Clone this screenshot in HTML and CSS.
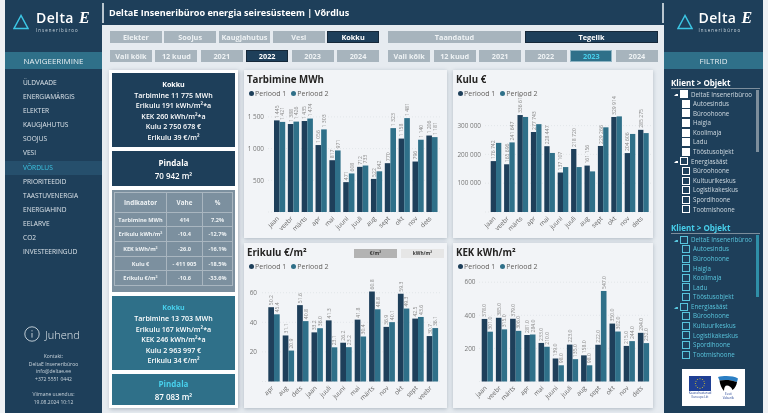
FILE: index.html
```html
<!DOCTYPE html>
<html lang="et">
<head>
    <meta charset="UTF-8">
    <meta name="viewport" content="width=device-width, initial-scale=1.0">
    <title>DeltaE Inseneribüroo energia seiresüsteem | Võrdlus</title>
    <link rel="stylesheet" href="styles.css">
</head>
<body>
<div class="page">
    <aside class="sidebar">
        <div class="logo">
            <svg class="logo-mark" viewBox="0 0 16 16"><path d="M8 1.5 1 14.5H15Z"/></svg>
            <div>
                <div class="logo-name">Delta <i>E</i></div>
                <div class="logo-sub">Inseneribüroo</div>
            </div>
        </div>
        <div class="band">NAVIGEERIMINE</div>
        <nav class="nav">
            <a href="#">ÜLDVAADE</a>
            <a href="#">ENERGIAMÄRGIS</a>
            <a href="#">ELEKTER</a>
            <a href="#">KAUGJAHUTUS</a>
            <a href="#">SOOJUS</a>
            <a href="#">VESI</a>
            <a href="#" class="active">VÕRDLUS</a>
            <a href="#">PRIORITEEDID</a>
            <a href="#">TAASTUVENERGIA</a>
            <a href="#">ENERGIAHIND</a>
            <a href="#">EELARVE</a>
            <a href="#">CO2</a>
            <a href="#">INVESTEERINGUD</a>
        </nav>
        <div class="guide">
            <svg class="guide-icon" viewBox="0 0 16 16"><circle cx="8" cy="8" r="7.2"/><path d="M8 7v4.6M8 4.2v1.2"/></svg>
            Juhend
        </div>
        <div class="contact">
            <p>Kontakt:<br>DeltaE Inseneribüroo<br>info@deltae.ee<br>+372 5551 0442</p>
            <p>Viimane uuendus:<br>19.08.2024 10:12</p>
        </div>
    </aside>

    <main class="main">
        <header class="topbar">
            <span class="divider"></span>
            <h1>DeltaE Inseneribüroo energia seiresüsteem | Võrdlus</h1>
            <span class="divider"></span>
        </header>

        <div class="filters">
            <div class="filter-group">
                <div class="btn-row five">
                    <button>Elekter</button>
                    <button>Soojus</button>
                    <button>Kaugjahutus</button>
                    <button>Vesi</button>
                    <button class="on">Kokku</button>
                </div>
                <div class="btn-row six">
                    <button>Vali köik</button>
                    <button>12 kuud</button>
                    <button>2021</button>
                    <button class="on">2022</button>
                    <button>2023</button>
                    <button>2024</button>
                </div>
            </div>
            <div class="filter-group">
                <div class="btn-row two">
                    <button>Taandatud</button>
                    <button class="on">Tegelik</button>
                </div>
                <div class="btn-row six">
                    <button>Vali kõik</button>
                    <button>12 kuud</button>
                    <button>2021</button>
                    <button>2022</button>
                    <button class="on-teal">2023</button>
                    <button>2024</button>
                </div>
            </div>
        </div>

        <div class="content">
            <section class="summary">
                <div class="stat stat-main">
                    <strong>Kokku</strong>
                    Tarbimine 11 775 MWh<br>
                    Erikulu 191 kWh/m²*a<br>
                    KEK 260 kWh/m²*a<br>
                    Kulu 2 750 678 €<br>
                    Erikulu 39 €/m²
                </div>
                <div class="stat stat-area">
                    <strong>Pindala</strong>
                    70 942 m²
                </div>
                <div class="table-wrap">
                    <table class="diff">
                        <tr><th>Indikaator</th><th>Vahe</th><th>%</th></tr>
                        <tr><td>Tarbimine MWh</td><td>414</td><td>7.2%</td></tr>
                        <tr><td>Erikulu kWh/m²</td><td>-10.4</td><td>-12.7%</td></tr>
                        <tr><td>KEK kWh/m²</td><td>-26.0</td><td>-16.1%</td></tr>
                        <tr><td>Kulu €</td><td>- 411 905</td><td>-18.5%</td></tr>
                        <tr><td>Erikulu €/m²</td><td>-10.6</td><td>-33.6%</td></tr>
                    </table>
                </div>
                <div class="stat stat-main teal">
                    <strong>Kokku</strong>
                    Tarbimine 13 703 MWh<br>
                    Erikulu 167 kWh/m²*a<br>
                    KEK 246 kWh/m²*a<br>
                    Kulu 2 963 997 €<br>
                    Erikulu 34 €/m²
                </div>
                <div class="stat stat-area teal">
                    <strong>Pindala</strong>
                    87 083 m²
                </div>
            </section>

            <section class="charts">
                <article class="chart-card">
                    <h2>Tarbimine MWh</h2>
                    <div class="legend"><span class="key">Periood 1</span><span class="key two">Periood 2</span></div>
                    <svg class="chart" id="chart-tarbimine"></svg>
                </article>
                <article class="chart-card narrow">
                    <h2>Kulu €</h2>
                    <div class="legend"><span class="key">Periood 1</span><span class="key two">Periood 2</span></div>
                    <svg class="chart" id="chart-kulu"></svg>
                </article>
                <article class="chart-card">
                    <div class="title-row">
                        <h2>Erikulu €/m²</h2>
                        <span class="unit on">€/m²</span>
                        <span class="unit">kWh/m²</span>
                    </div>
                    <div class="legend"><span class="key">Periood 1</span><span class="key two">Periood 2</span></div>
                    <svg class="chart" id="chart-erikulu"></svg>
                </article>
                <article class="chart-card narrow">
                    <h2>KEK kWh/m²</h2>
                    <div class="legend"><span class="key">Periood 1</span><span class="key two">Periood 2</span></div>
                    <svg class="chart" id="chart-kek"></svg>
                </article>
            </section>
        </div>
    </main>

    <aside class="sidebar right">
        <div class="logo">
            <svg class="logo-mark" viewBox="0 0 16 16"><path d="M8 1.5 1 14.5H15Z"/></svg>
            <div>
                <div class="logo-name">Delta <i>E</i></div>
                <div class="logo-sub">Inseneribüroo</div>
            </div>
        </div>
        <div class="band">FILTRID</div>

        <div class="slicer">
            <h3>Klient &gt; Objekt</h3>
            <span class="scroll"></span>
            <ul class="tree">
                <li class="parent full">DeltaE Inseneribüroo</li>
                <li class="full">Autoesindus</li>
                <li class="full">Büroohoone</li>
                <li class="full">Haigla</li>
                <li class="full">Koolimaja</li>
                <li class="full">Ladu</li>
                <li class="full">Tööstusobjekt</li>
                <li class="parent">Energiasääst</li>
                <li>Büroohoone</li>
                <li>Kultuurikeskus</li>
                <li>Logistikakeskus</li>
                <li>Spordihoone</li>
                <li>Tootmishoone</li>
            </ul>
        </div>

        <div class="slicer cyan">
            <h3>Klient &gt; Objekt</h3>
            <span class="scroll"></span>
            <ul class="tree">
                <li class="parent">DeltaE Inseneribüroo</li>
                <li>Autoesindus</li>
                <li>Büroohoone</li>
                <li>Haigla</li>
                <li>Koolimaja</li>
                <li>Ladu</li>
                <li>Tööstusobjekt</li>
                <li class="parent">Energiasääst</li>
                <li>Büroohoone</li>
                <li>Kultuurikeskus</li>
                <li>Logistikakeskus</li>
                <li>Spordihoone</li>
                <li>Tootmishoone</li>
            </ul>
        </div>

        <div class="funders">
            <div class="funder">
                <svg class="flag" viewBox="0 0 22 15">
                    <rect width="22" height="15" fill="#1f3f93"/>
                    <g fill="#e8d21f">
                        <circle cx="11" cy="2.7" r=".5"/><circle cx="13.4" cy="3.4" r=".5"/><circle cx="15" cy="5.2" r=".5"/>
                        <circle cx="15.6" cy="7.5" r=".5"/><circle cx="15" cy="9.8" r=".5"/><circle cx="13.4" cy="11.6" r=".5"/>
                        <circle cx="11" cy="12.3" r=".5"/><circle cx="8.6" cy="11.6" r=".5"/><circle cx="7" cy="9.8" r=".5"/>
                        <circle cx="6.4" cy="7.5" r=".5"/><circle cx="7" cy="5.2" r=".5"/><circle cx="8.6" cy="3.4" r=".5"/>
                    </g>
                </svg>
                <small>Kaasrahastanud<br>Euroopa Liit</small>
            </div>
            <div class="funder">
                <svg class="crest" viewBox="0 0 20 16">
                    <path d="M0 1C6-.5 15-.5 20 2.5L19 6C13 3.5 6 3.5 1.5 4.5Z" fill="#2b7fc4"/>
                    <path d="M1.5 4.5C6 3.5 13 3.5 19 6 18.5 9.5 17 12 14.5 14 13.5 11 11 9.5 9 9.5 7 9.5 6 11.5 6 15 3.5 12.5 2 8.5 1.5 4.5Z" fill="#000"/>
                </svg>
                <small>Eesti<br>Vabariik</small>
            </div>
        </div>
    </aside>
</div>
<script src="charts.js"></script>
</body>
</html>
```

FILE: styles.css
```css
* {
    box-sizing: border-box;
}
body {
    margin: 0;
    background: #eef1f4;
    font-family: "Open Sans", "Noto Sans", sans-serif;
    overflow: hidden;
}
.page {
    display: flex;
    width: 768px;
    height: 413px;
    padding: 0 5px;
    overflow: hidden;
    filter: blur(.35px);
}

/* side columns */
.sidebar {
    display: flex;
    flex-direction: column;
    flex: 0 0 97px;
    background: #1e3f5a;
    color: #fff;
}
.sidebar.right {
    flex-basis: 99px;
}
.logo {
    display: flex;
    align-items: center;
    justify-content: center;
    gap: 5px;
    height: 52px;
    padding-bottom: 9px;
}
.sidebar:not(.right) .logo {
    gap: 7px;
    padding-right: 4px;
}
.sidebar.right .logo {
    padding-left: 3px;
}
.logo-mark {
    width: 16px;
    height: 16px;
    fill: none;
    stroke: #3cc6e4;
    stroke-width: 1.5;
}
.logo-name {
    font-size: 14px;
    font-weight: 600;
    line-height: 15px;
    letter-spacing: .4px;
}
.logo-name i {
    font-family: "Liberation Serif", serif;
    font-weight: 700;
    font-size: 16px;
    margin-left: 1px;
}
.logo-sub {
    margin-top: 3px;
    font-size: 4.4px;
    line-height: 5px;
    letter-spacing: 1.05px;
    color: #cfd9e0;
}
.band {
    height: 17px;
    background: #2f7089;
    font-size: 8px;
    line-height: 17px;
    text-align: center;
    color: #e6eef2;
}

.nav {
    display: flex;
    flex-direction: column;
    margin-top: 7px;
}
.nav a {
    height: 14.1px;
    padding-left: 18px;
    font-size: 6.6px;
    line-height: 14.1px;
    color: #dbe3e9;
    text-decoration: none;
}
.nav a.active {
    background: #264f6c;
    color: #3cc6e4;
}

.guide {
    display: flex;
    align-items: center;
    gap: 5px;
    margin-top: auto;
    padding-left: 19px;
    font-size: 11px;
    font-weight: 300;
    color: #dfe7ec;
}
.guide-icon {
    width: 16px;
    height: 16px;
    fill: none;
    stroke: #e6edf1;
    stroke-width: .8;
}
.contact {
    height: 60px;
    margin-top: 11px;
    font-size: 5px;
    line-height: 7.6px;
    text-align: center;
    color: #c9d4dc;
}
.contact p {
    margin: 0 0 8px;
}

/* main column */
.main {
    display: flex;
    flex-direction: column;
    flex: 1;
    min-width: 0;
    background: #e6ebf0;
}
.topbar {
    display: flex;
    align-items: center;
    justify-content: space-between;
    height: 25px;
    background: #1e3f5a;
}
.topbar h1 {
    flex: 1;
    margin: 0 0 0 5px;
    font-size: 9.1px;
    font-weight: 700;
    color: #fff;
}
.divider {
    width: 2px;
    height: 20px;
    background: #b9c6cf;
}

.filters {
    display: grid;
    grid-template-columns: 269px 270px;
    column-gap: 9px;
    padding: 6px 0 0 8px;
}
.filter-group {
    display: flex;
    flex-direction: column;
    gap: 7px;
}
.btn-row {
    display: grid;
    height: 12px;
}
.btn-row.five {
    grid-template-columns: repeat(5, 1fr);
    column-gap: 2.5px;
}
.btn-row.six {
    grid-template-columns: repeat(6, 1fr);
    column-gap: 3.5px;
}
.btn-row.two {
    grid-template-columns: 1fr 1fr;
    column-gap: 4px;
}
.btn-row button {
    padding: 0;
    border: 0;
    background: #a7b4bd;
    font-family: inherit;
    font-size: 7.3px;
    font-weight: 700;
    color: #eef2f4;
}
.btn-row button.on {
    background: #1e3f5a;
    border: 1px solid #16293a;
    color: #fff;
}
.btn-row button.on-teal {
    background: #2f7089;
    border: 1px solid #8fb4c3;
    color: #48d0ec;
}

.content {
    display: flex;
    flex: 1;
    gap: 6px;
    padding: 8px 0 5px 7px;
    min-height: 0;
}
.summary {
    display: flex;
    flex-direction: column;
    flex: 0 0 129px;
    gap: 4px;
    padding: 3px;
    background: #fff;
    box-shadow: 1px 1px 4px rgba(50, 70, 90, .35);
}
.stat {
    background: #1e3f5a;
    font-size: 7.1px;
    font-weight: 600;
    line-height: 10.6px;
    text-align: center;
    color: #fff;
}
.stat strong {
    display: block;
    font-weight: 700;
    color: #fff;
}
.stat.teal {
    background: #2f7089;
}
.stat.teal strong {
    color: #48d0ec;
}
.stat-main {
    height: 74px;
    padding-top: 6px;
}
.stat-area {
    height: 35px;
    padding-top: 5px;
    font-size: 8px;
    line-height: 13px;
}
.stat-area.teal {
    height: 31px;
    padding-top: 3px;
}
.table-wrap {
    height: 103px;
    padding: 2px;
    background: #7c909f;
}
.diff {
    width: 100%;
    height: 93px;
    table-layout: fixed;
    border-collapse: collapse;
    font-size: 5.6px;
    font-weight: 700;
    text-align: center;
    color: #eef2f4;
}
.diff th,
.diff td {
    padding: 0;
    border: 1px solid #a9b6c0;
}
.diff th {
    height: 20px;
    font-size: 6.3px;
}
.diff td {
    height: 14.7px;
}
.diff th:first-child {
    width: 52px;
}
.diff th:nth-child(2) {
    width: 36px;
}

/* charts */
.charts {
    display: grid;
    grid-template-columns: 203px 200px;
    grid-template-rows: 168px 165px;
    gap: 5px 6px;
}
.chart-card {
    display: flex;
    flex-direction: column;
    background: #f2f4f7;
    box-shadow: 0 1px 4px rgba(50, 70, 90, .3);
    padding: 3px 0 0 3px;
    min-height: 0;
}
.chart-card h2 {
    margin: 0;
    font-size: 9.7px;
    font-weight: 700;
    line-height: 14px;
    color: #252423;
}
.title-row {
    display: flex;
    align-items: center;
    gap: 4px;
    padding-right: 3px;
}
.title-row h2 {
    flex: 1;
}
.unit {
    width: 43px;
    height: 9px;
    background: #e6e6e6;
    font-size: 4.8px;
    font-weight: 700;
    line-height: 9px;
    text-align: center;
    color: #333;
}
.unit.on {
    background: #b3b3b3;
}
.legend {
    display: flex;
    gap: 5px;
    height: 11px;
    margin-top: 1px;
    padding-left: 2px;
    align-items: center;
    font-size: 7px;
    color: #605e5c;
}
.key {
    display: flex;
    align-items: center;
    gap: 1px;
}
.key::before {
    content: "";
    width: 5px;
    height: 5px;
    border-radius: 50%;
    background: #1e3f5a;
}
.key.two::before {
    background: #2f7089;
}
.chart {
    display: block;
    flex: 1;
    width: calc(100% + 3px);
    min-height: 0;
    margin-top: -1px;
    margin-left: -3px;
    overflow: visible;
}
.chart text {
    font-family: "Open Sans", "Noto Sans", sans-serif;
}
.bar-a {
    fill: #1e3f5a;
}
.bar-b {
    fill: #2f7089;
}
.grid-line {
    stroke: #d9dde1;
    stroke-width: .6;
    stroke-dasharray: 1 2;
}
.tick {
    font-size: 6.4px;
    fill: #777;
    text-anchor: end;
}
.cat {
    font-size: 6.4px;
    fill: #666;
    text-anchor: end;
}
.val {
    font-size: 5.1px;
    fill: #8a8a8a;
}

/* filter lists */
.slicer {
    position: relative;
    margin: 8.5px 3px 0 7px;
}
.slicer h3 {
    height: 11px;
    margin: 0 0 1px;
    border-bottom: 1px solid #7d8e9c;
    font-size: 8px;
    font-weight: 700;
    line-height: 10px;
    color: #fff;
}
.scroll {
    position: absolute;
    top: 12px;
    right: 1px;
    width: 3px;
    height: 62px;
    background: #7d8e9c;
}
.tree {
    margin: 0;
    padding: 0;
    list-style: none;
    font-size: 6.2px;
    line-height: 9.6px;
    color: #cfd9e0;
}
.tree li {
    display: flex;
    align-items: center;
    gap: 3px;
    height: 9.6px;
    padding-left: 11px;
}
.tree li::before {
    content: "";
    flex: none;
    width: 6px;
    height: 6px;
    border: 1px solid #fff;
}
.tree li.full::before {
    background: #fff;
}
.tree li.parent {
    padding-left: 3px;
}
.tree li.parent::after {
    content: "";
    order: -1;
    flex: none;
    width: 2px;
    height: 2px;
    margin-right: -1px;
    border-left: 2px solid transparent;
    border-bottom: 2px solid #fff;
}
.slicer.cyan h3 {
    color: #48d0ec;
}
.slicer.cyan .tree {
    color: #58c4dc;
}
.slicer.cyan .tree li::before {
    border-color: #58c4dc;
}
.slicer.cyan .tree li.parent::after {
    border-bottom-color: #58c4dc;
}
.slicer.cyan .scroll {
    background: #2f8fa8;
}

.funders {
    display: flex;
    justify-content: center;
    gap: 7px;
    width: 63px;
    height: 37px;
    margin: 10px 0 0 18px;
    padding-top: 7px;
    background: #fff;
}
.funder {
    display: flex;
    flex-direction: column;
    align-items: center;
}
.flag {
    width: 22px;
    height: 15px;
}
.crest {
    width: 20px;
    height: 16px;
}
.funder small {
    margin-top: 1px;
    font-size: 3px;
    line-height: 3.4px;
    text-align: center;
    color: #1f3f93;
}
```

FILE: charts.js
```js
const NS = "http://www.w3.org/2000/svg";
const months = ["jaan", "veebr", "märts", "apr", "mai", "juuni", "juuli", "aug", "sept", "okt", "nov", "dets"];

const spaced = n => String(n).replace(/\B(?=(\d{3})+$)/g, " ");

// x values are relative to the card's left edge, y to the top of the svg
const charts = [
    {
        id: "chart-tarbimine", cats: months, zero: 114, scale: 31.7 / 500,
        ticks: [500, 1000, 1500], tickX: 20, gridFrom: 24, gridTo: 198,
        start: 30, pitch: 13.85, barW: 5.6, fmt: spaced,
        a: [1445, 1388, 1435, 1056, 817, 471, 712, 522, 770, 1158, 796, 1206],
        b: [1421, 1426, 1474, 1303, 971, 608, 733, 642, 1323, 1481, 1140, 1181]
    },
    {
        id: "chart-kulu", cats: months, zero: 114, scale: 28.8 / 100000,
        ticks: [100000, 200000, 300000], tickX: 28, gridFrom: 32, gridTo: 198,
        start: 37.7, pitch: 13.4, barW: 5.3, fmt: spaced,
        a: [176742, 165696, 336616, 277743, 228447, 137107, 218720, 161156, 229266, 329914, 204606, 285275],
        b: [240000, 241647, 330000, 305000, 205000, 156000, 156000, 141000, 294000, 332000, 271000, 274000],
        showB: [1]
    },
    {
        id: "chart-erikulu", zero: 110.5, scale: 29.6 / 20,
        cats: ["apr", "aug", "dets", "jaan", "juuli", "juuni", "mai", "märts", "nov", "okt", "sept", "veebr"],
        ticks: [20, 40, 60], tickX: 13, gridFrom: 18, gridTo: 198,
        start: 24.3, pitch: 14.4, barW: 5.7, fmt: n => n.toFixed(1),
        a: [50.2, 31.1, 51.6, 33.2, 41.3, 26.2, 41.8, 60.8, 36.9, 59.3, 42.5, 30.7],
        b: [45.4, 20.9, 40.8, 36.0, 23.1, 23.2, 30.4, 48.8, 40.1, 49.3, 43.6, 36.1]
    },
    {
        id: "chart-kek", cats: months, zero: 110.5, scale: 33.1 / 200,
        ticks: [200, 400, 600], tickX: 22.5, gridFrom: 26, gridTo: 197,
        start: 28.7, pitch: 14.2, barW: 5.6, fmt: n => n.toFixed(1),
        a: [378, 385, 379, 281, 233, 139, 223, 158, 222, 350, 215, 294],
        b: [301, 315, 306, 284, 210, 98, 135, 98, 547, 302, 244, 232]
    }
];

function add(svg, tag, attrs, text) {
    const el = document.createElementNS(NS, tag);
    for (const key in attrs) el.setAttribute(key, attrs[key]);
    if (text !== undefined) el.textContent = text;
    svg.appendChild(el);
}

function drawBar(svg, c, x, value, cls, showLabel) {
    const h = value * c.scale;
    const top = c.zero - h;
    add(svg, "rect", { class: cls, x: x, y: top, width: c.barW, height: h });
    if (!showLabel) return;
    const lx = x + c.barW / 2 + 2;
    const ly = top - 2;
    add(svg, "text", { class: "val", x: lx, y: ly, transform: `rotate(-90 ${lx} ${ly})` }, c.fmt(value));
}

charts.forEach(c => {
    const svg = document.getElementById(c.id);
    c.ticks.forEach(t => {
        const y = c.zero - t * c.scale;
        add(svg, "line", { class: "grid-line", x1: c.gridFrom, x2: c.gridTo, y1: y, y2: y });
        add(svg, "text", { class: "tick", x: c.tickX, y: y + 2.2 }, spaced(t));
    });
    add(svg, "line", { class: "grid-line", x1: c.gridFrom, x2: c.gridTo, y1: c.zero, y2: c.zero });

    c.cats.forEach((cat, i) => {
        const x = c.start + i * c.pitch;
        drawBar(svg, c, x, c.a[i], "bar-a", true);
        drawBar(svg, c, x + c.barW, c.b[i], "bar-b", !c.showB || c.showB.includes(i));
        const cx = x + c.barW;
        const cy = c.zero + 7;
        add(svg, "text", { class: "cat", x: cx, y: cy, transform: `rotate(-45 ${cx} ${cy})` }, cat);
    });
});
```
